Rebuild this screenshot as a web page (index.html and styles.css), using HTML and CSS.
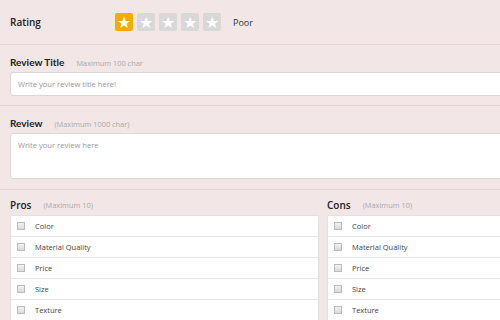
FILE: index.html
```html
<!DOCTYPE html>
<html lang="en">
<head>
  <meta name="viewport" content="width=device-width, initial-scale=1">
  <link rel="stylesheet" href="styles.css">
  <title>Write a Review</title>
</head>
<body>

<div class="page">
  <!-- Rating -->
  <div class="section rating-row">
    <h3 class="label">Rating</h3>
    <div class="stars">
      <span class="star on">&#9733;</span>
      <span class="star">&#9733;</span>
      <span class="star">&#9733;</span>
      <span class="star">&#9733;</span>
      <span class="star">&#9733;</span>
    </div>
    <span class="rating-text">Poor</span>
  </div>

  <!-- Review Title -->
  <div class="section title-section">
    <div class="field-head">
      <h3 class="label">Review Title</h3>
      <span class="hint">Maximum 100 char</span>
    </div>
    <input type="text" class="text-input" placeholder="Write your review title here!">
  </div>

  <!-- Review -->
  <div class="section">
    <div class="field-head">
      <h3 class="label">Review</h3>
      <span class="hint">(Maximum 1000 char)</span>
    </div>
    <textarea class="text-area" placeholder="Write your review here"></textarea>
  </div>

  <!-- Pros & Cons -->
  <div class="section pros-cons">
    <div class="col">
      <div class="field-head">
        <h3 class="label plain">Pros</h3>
        <span class="hint">(Maximum 10)</span>
      </div>
      <ul class="check-list">
        <li><input type="checkbox"><span>Color</span></li>
        <li><input type="checkbox"><span>Material Quality</span></li>
        <li><input type="checkbox"><span>Price</span></li>
        <li><input type="checkbox"><span>Size</span></li>
        <li><input type="checkbox"><span>Texture</span></li>
      </ul>
    </div>
    <div class="col">
      <div class="field-head">
        <h3 class="label plain">Cons</h3>
        <span class="hint">(Maximum 10)</span>
      </div>
      <ul class="check-list">
        <li><input type="checkbox"><span>Color</span></li>
        <li><input type="checkbox"><span>Material Quality</span></li>
        <li><input type="checkbox"><span>Price</span></li>
        <li><input type="checkbox"><span>Size</span></li>
        <li><input type="checkbox"><span>Texture</span></li>
      </ul>
    </div>
  </div>
</div>

</body>
</html>
```

FILE: styles.css
```css
body {
  font-family: "Open Sans", Arial, sans-serif;
  background-color: #f2e6e6;
  margin: 0;
  padding: 0;
  overflow: hidden;
}
.page {
  width: 660px;
}
.section {
  padding: 10px 0 10px 10px;
  border-bottom: 1px solid #e6d4d4;
}
.title-section {
  padding-bottom: 9px;
}
.label {
  margin: 0;
  font-family: Lato, "Open Sans", sans-serif;
  font-size: 10px;
  line-height: 14px;
  font-weight: bold;
  color: #222;
}
.label.plain {
  font-family: "Open Sans", sans-serif;
  font-weight: 600;
}
.rating-row {
  display: flex;
  align-items: center;
  height: 24px;
}
.rating-row .label {
  width: 105px;
  font-family: "Open Sans", sans-serif;
  font-weight: 600;
}
.stars {
  display: flex;
  gap: 4px;
}
.star {
  width: 18px;
  height: 18px;
  border-radius: 2px;
  background-color: #d8d8d8;
  color: #fff;
  font-size: 16px;
  line-height: 18px;
  text-align: center;
}
.star.on {
  background-color: #f9a900;
}
.rating-text {
  margin-left: 12px;
  font-size: 9px;
  color: #333;
}
.field-head {
  display: flex;
  align-items: center;
  gap: 12px;
  height: 14px;
  margin-bottom: 3px;
}
.hint {
  font-size: 7.4px;
  line-height: 14px;
  padding-top: 1px;
  color: #aaa;
}
.text-input,
.text-area {
  display: block;
  width: 100%;
  box-sizing: border-box;
  border: 1px solid #d8d8d8;
  border-radius: 3px;
  background-color: #fff;
  font-family: "Open Sans", Arial, sans-serif;
  font-size: 7.6px;
  padding: 0 7px;
  margin: 0;
  outline: none;
}
.text-input {
  height: 24px;
}
.text-area {
  height: 46px;
  padding-top: 6px;
  resize: none;
}
.text-input::placeholder,
.text-area::placeholder {
  color: #999;
}
.pros-cons {
  display: flex;
  gap: 8px;
  padding-top: 8px;
  border-bottom: none;
}
.pros-cons .field-head {
  height: 13px;
  margin-bottom: 4px;
}
.col {
  width: 309px;
}
.check-list {
  list-style: none;
  margin: 0;
  padding: 0;
  background-color: #fff;
  border: 1px solid #e2e2e2;
  border-radius: 2px;
}
.check-list li {
  display: flex;
  align-items: center;
  height: 20px;
  border-bottom: 1px solid #e6e6e6;
  font-size: 7.5px;
  color: #444;
}
.check-list input {
  width: 8px;
  height: 8px;
  margin: 0 10px 0 6px;
  appearance: none;
  border: 1px solid #bbb;
  background: linear-gradient(#f2f2f2, #dadada);
}
```
